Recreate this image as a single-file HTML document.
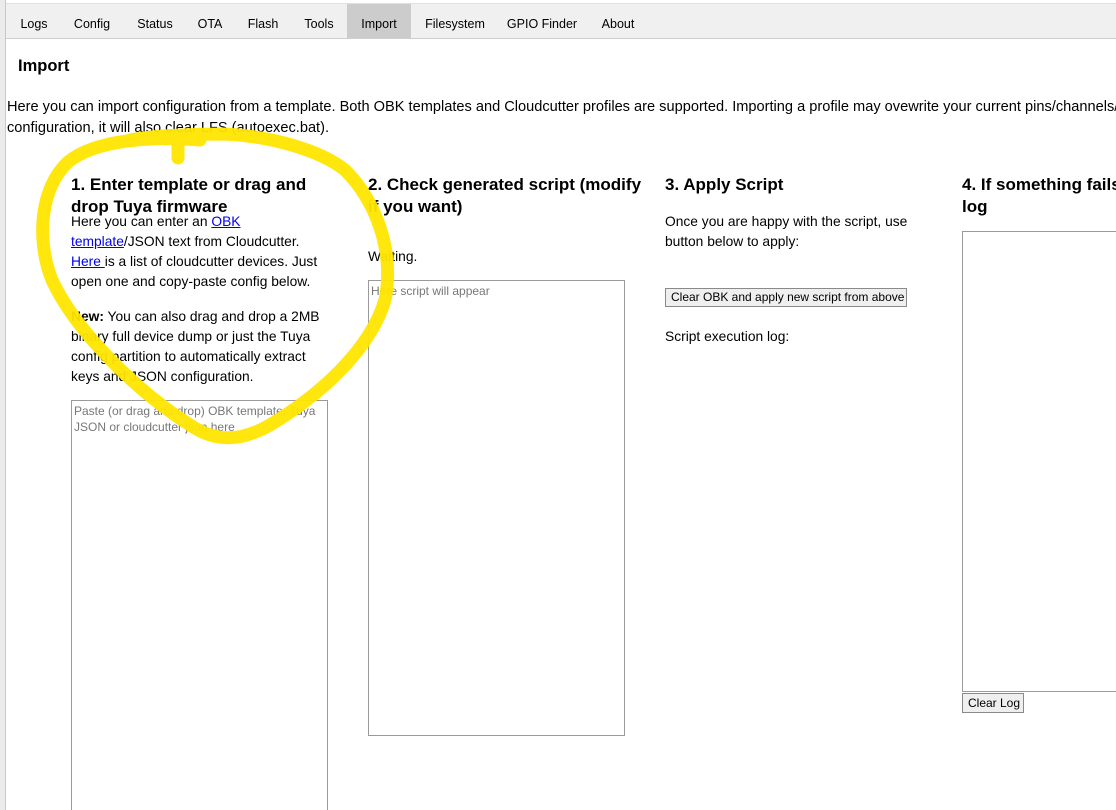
<!DOCTYPE html>
<html><head><style>
body{margin:0;width:1116px;height:810px;overflow:hidden;background:#fff;font-family:"Liberation Sans",sans-serif;color:#000;position:relative}
.strip{position:absolute;left:0;top:0;width:5px;height:810px;background:#ebebeb;border-right:1px solid #c8c8c8}
.tabs{position:absolute;left:6px;top:3px;width:1110px;height:34px;background:#f0f0f0;border-bottom:1px solid #cfcfcf;border-top:1px solid #e0e0e0}
.tab{position:absolute;top:0;height:34px;line-height:41px;font-size:12.5px;text-align:center}
.act{background:#cccccc}
.abs{position:absolute}
h1{position:absolute;left:18px;top:57px;margin:0;font-size:16.5px;font-weight:bold}
.intro{position:absolute;left:7px;top:97px;width:1109px;overflow:hidden;font-size:14.6px;line-height:21px;white-space:nowrap}
h2{position:absolute;margin:0;font-size:17px;font-weight:bold;line-height:22px;width:275px}
.p{position:absolute;font-size:13.8px;line-height:20px;width:265px}
a{color:#0000ee}
.ta{position:absolute;border:1px solid #9a9a9a;background:#fff;font-size:12px;color:#777;padding:2px 2px;box-sizing:border-box;line-height:16px}
.btn{position:absolute;border:1px solid #8a8a8a;background:#efefef;font-size:12px;line-height:16px;padding:0 5px;box-sizing:border-box;white-space:nowrap}
.clip{position:absolute;left:0;top:0;width:1116px;height:810px;overflow:hidden}
</style></head><body><div class="clip">
<div class="strip"></div>
<div class="tabs">
<div class="tab" style="left:6px;width:44px">Logs</div>
<div class="tab" style="left:62px;width:48px">Config</div>
<div class="tab" style="left:124px;width:50px">Status</div>
<div class="tab" style="left:186px;width:36px">OTA</div>
<div class="tab" style="left:236px;width:42px">Flash</div>
<div class="tab" style="left:292px;width:42px">Tools</div>
<div class="tab act" style="left:341px;width:64px">Import</div>
<div class="tab" style="left:414px;width:70px">Filesystem</div>
<div class="tab" style="left:496px;width:80px">GPIO Finder</div>
<div class="tab" style="left:588px;width:48px">About</div>
</div>
<h1>Import</h1>
<div class="intro">Here you can import configuration from a template. Both OBK templates and Cloudcutter profiles are supported. Importing a profile may ovewrite your current pins/channels/settings<br>configuration, it will also clear LFS (autoexec.bat).</div>

<h2 style="left:71px;top:174px;width:245px">1. Enter template or drag and drop Tuya firmware</h2>
<div class="p" style="left:71px;top:212px">Here you can enter an <a href="#">OBK</a><br><a href="#">template</a>/JSON text from Cloudcutter.<br><a href="#">Here </a>is a list of cloudcutter devices. Just open one and copy-paste config below.</div>
<div class="p" style="left:71px;top:307px;width:258px"><b>New:</b> You can also drag and drop a 2MB binary full device dump or just the Tuya config partition to automatically extract keys and JSON configuration.</div>
<div class="ta" style="left:71px;top:400px;width:257px;height:420px">Paste (or drag and drop) OBK template, Tuya JSON or cloudcutter json here</div>

<h2 style="left:368px;top:174px">2. Check generated script (modify if you want)</h2>
<div class="p" style="left:368px;top:247px">Waiting.</div>
<div class="ta" style="left:368px;top:280px;width:257px;height:456px">Here script will appear</div>

<h2 style="left:665px;top:174px">3. Apply Script</h2>
<div class="p" style="left:665px;top:212px">Once you are happy with the script, use button below to apply:</div>
<div class="btn" style="left:665px;top:288px;width:242px;height:19px">Clear OBK and apply new script from above</div>
<div class="p" style="left:665px;top:327px">Script execution log:</div>

<h2 style="left:962px;top:174px;white-space:nowrap">4. If something fails, check<br>log</h2>
<div class="ta" style="left:962px;top:231px;width:170px;height:461px"></div>
<div class="btn" style="left:962px;top:693px;width:62px;height:20px;line-height:18px">Clear Log</div>

<svg class="abs" style="left:0;top:0" width="1116" height="810">
<path d="M200 140 C150 136 95 140 68 162 C40 188 36 240 52 280 C75 330 135 390 190 425 C215 442 240 442 270 425 C320 395 370 350 385 300 C395 250 375 200 345 170 C320 150 270 136 225 134 C190 134 150 136 130 140 M178 140 L178 158" fill="none" stroke="#ffe600" stroke-width="13" stroke-linecap="round" opacity="0.95"/>
</svg>
</div></body></html>
